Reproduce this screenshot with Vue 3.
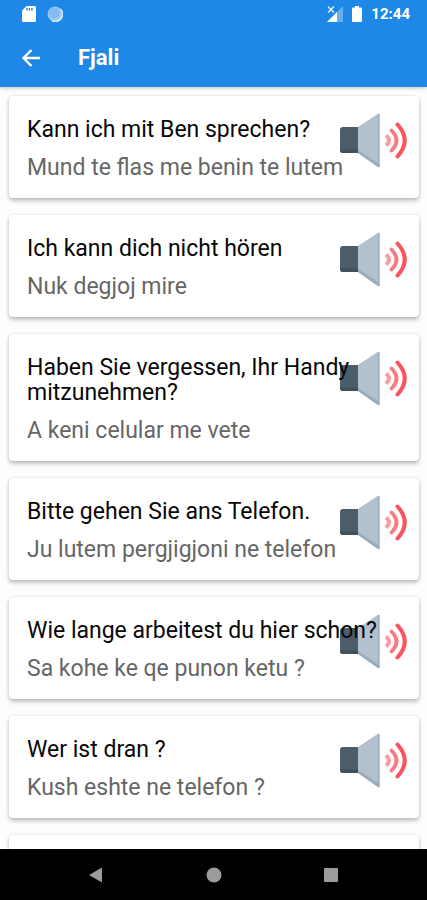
<script setup>
const phrases = [
  { german: 'Kann ich mit Ben sprechen?', albanian: 'Mund te flas me benin te lutem' },
  { german: 'Ich kann dich nicht hören', albanian: 'Nuk degjoj mire' },
  { german: 'Haben Sie vergessen, Ihr Handy mitzunehmen?', albanian: 'A keni celular me vete' },
  { german: 'Bitte gehen Sie ans Telefon.', albanian: 'Ju lutem pergjigjoni ne telefon' },
  { german: 'Wie lange arbeitest du hier schon?', albanian: 'Sa kohe ke qe punon ketu ?' },
  { german: 'Wer ist dran ?', albanian: 'Kush eshte ne telefon ?' },
]
</script>

<template>
  <div class="screen">
    <header class="header">
      <div class="status">
        <svg class="sd" width="14" height="16" viewBox="0 0 14 16">
          <path d="M4.500 0H12.500Q14 0 14 1.500V14.500Q14 16 12.500 16H1.500Q0 16 0 14.500V4.500Z" fill="#fff" />
          <path d="M5 2V4.500M7.500 2V4.500M10 2V4.500" stroke="#1f87e5" stroke-width="1.400" />
        </svg>
        <svg width="16" height="16" viewBox="0 0 16 16">
          <circle cx="8" cy="8" r="7.500" fill="#9cc9f3" />
          <path d="M13.500 3A7.300 7.300 0 0 1 5 14.600" fill="none" stroke="#d3e8fb" stroke-width="1.800" />
          <circle cx="7" cy="7" r="5.500" fill="#84bbf0" />
        </svg>
        <span class="spacer"></span>
        <svg width="16" height="16" viewBox="0 0 16 16">
          <path d="M16 0V16H0Z" fill="#69aff0" />
          <path d="M10 6V16H0Z" fill="#fff" />
          <path d="M1 0.500L7 6.500M7 0.500L1 6.500" stroke="#1f87e5" stroke-width="3.500" />
          <path d="M1 0.500L7 6.500M7 0.500L1 6.500" stroke="#e5f1fd" stroke-width="1.500" />
        </svg>
        <svg class="battery" width="10" height="16" viewBox="0 0 10 16">
          <path d="M3 0H7V1.500H9Q10 1.500 10 2.500V15Q10 16 9 16H1Q0 16 0 15V2.500Q0 1.500 1 1.500H3Z" fill="#fff" />
        </svg>
        <span class="clock">12:44</span>
      </div>
      <div class="appbar">
        <button class="back" aria-label="Back">
          <svg width="18" height="18" viewBox="0 0 18 18">
            <path d="M18 9H2M9.500 1L1.500 9L9.500 17" fill="none" stroke="#fff" stroke-width="2.400" />
          </svg>
        </button>
        <h1 class="title">Fjali</h1>
      </div>
    </header>

    <main class="list">
      <article v-for="phrase in phrases" :key="phrase.german" class="card">
        <button class="speak" :aria-label="phrase.german">
          <svg width="68" height="55" viewBox="0 0 68 55">
            <rect x="0" y="14" width="22" height="26" rx="3" fill="#4a5d68" />
            <path d="M0 36.500H20V40H3Q0 40 0 37Z" fill="#41515b" />
            <path d="M18 14L38 0.800Q39.500 0 39.500 2V53Q39.500 55 38 54L18 40Z" fill="#b2c1cd" />
            <path d="M18 37L39.500 51V53Q39.500 55 38 54L18 40Z" fill="#9aabb9" />
            <path d="M38.700 1V54" stroke="#9eafbd" stroke-width="1.500" />
            <path d="M46 22.500Q52 27.500 46 32.500" fill="none" stroke="#fb9aa1" stroke-width="4" />
            <path d="M51.500 17.500Q61.500 27.500 51.500 37.500" fill="none" stroke="#fb7983" stroke-width="3.800" stroke-linecap="round" />
            <path d="M57.500 11.500Q72 27.500 57.500 43.500" fill="none" stroke="#fb5361" stroke-width="4" stroke-linecap="round" />
          </svg>
        </button>
        <h2 class="german">{{ phrase.german }}</h2>
        <p class="albanian">{{ phrase.albanian }}</p>
      </article>
      <article class="card"></article>
    </main>

    <nav class="navbar">
      <button aria-label="Back">
        <svg width="16" height="16" viewBox="0 0 16 16"><path d="M13 0.500V15.500L0 8Z" fill="#9b9b9b" /></svg>
      </button>
      <button aria-label="Home">
        <svg width="16" height="16" viewBox="0 0 16 16"><circle cx="8" cy="8" r="7.500" fill="#9b9b9b" /></svg>
      </button>
      <button aria-label="Recent apps">
        <svg width="16" height="16" viewBox="0 0 16 16"><rect x="1" y="1" width="14" height="14" rx="1" fill="#9b9b9b" /></svg>
      </button>
    </nav>
  </div>
</template>

<style>
body {
  margin: 0;
  background: #fdfdfd;
}
</style>

<style scoped>
.screen {
  display: flex;
  flex-direction: column;
  height: 100vh;
  font-family: Roboto, sans-serif;
}
button {
  display: flex;
  padding: 0;
  border: 0;
  background: none;
  cursor: pointer;
}
svg {
  display: block;
}
.header {
  position: relative;
  z-index: 2;
  flex: none;
  background: #1f87e5;
  color: #fff;
  box-shadow: 0 1px 4px rgba(0, 0, 0, 0.25);
}
.status {
  display: flex;
  align-items: center;
  height: 28px;
  padding: 0 17px 0 22px;
}
.sd {
  margin-right: 11px;
}
.spacer {
  flex: 1;
}
.battery {
  margin: 0 9px;
}
.clock {
  font-size: 15px;
  font-weight: 700;
  line-height: 28px;
}
.appbar {
  display: flex;
  align-items: center;
  gap: 38px;
  height: 59px;
  padding: 0 22px;
}
.title {
  margin: 0;
  font-size: 22px;
  font-weight: 700;
  line-height: 26px;
}
.list {
  display: flex;
  flex: 1;
  flex-direction: column;
  gap: 17px;
  min-height: 0;
  padding: 9px 8px 0 9px;
  overflow: hidden;
}
.card {
  position: relative;
  flex: none;
  box-sizing: border-box;
  min-height: 102px;
  padding: 21px 18px 18px;
  border-radius: 4px;
  background: #fff;
  box-shadow: 0 3px 4px rgba(0, 0, 0, 0.22), 0 0 3px rgba(0, 0, 0, 0.14);
}
.speak {
  position: absolute;
  top: 17px;
  right: 11px;
}
.german,
.albanian {
  position: relative;
  margin: 0;
  font-size: 23px;
  line-height: 25px;
  pointer-events: none;
}
.german {
  color: #080808;
  font-weight: 400;
}
.albanian {
  margin-top: 13px;
  color: #666;
}
.navbar {
  position: relative;
  z-index: 2;
  display: flex;
  flex: none;
  align-items: center;
  justify-content: center;
  gap: 101px;
  height: 51px;
  background: #000;
}
</style>
